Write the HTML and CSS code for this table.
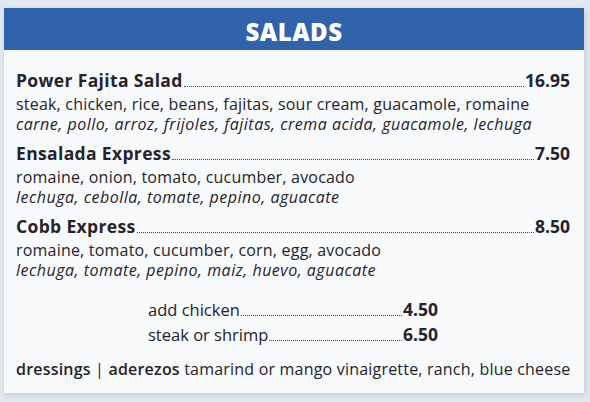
FILE: index.html
```html
<!DOCTYPE html>
<html>
<head>
<meta charset="utf-8">
<link rel="stylesheet" href="styles.css">
</head>
<body>
<div class="card">
  <div class="header">SALADS</div>
  <div class="content">
    <div class="item">
      <div class="row"><span class="name">Power Fajita Salad</span><span class="dots"></span><span class="price">16.95</span></div>
      <div class="descs">
        <div class="desc">steak, chicken, rice, beans, fajitas, sour cream, guacamole, romaine</div>
        <div class="desc es">carne, pollo, arroz, frijoles, fajitas, crema acida, guacamole, lechuga</div>
      </div>
    </div>
    <div class="item">
      <div class="row"><span class="name">Ensalada Express</span><span class="dots"></span><span class="price">7.50</span></div>
      <div class="descs">
        <div class="desc">romaine, onion, tomato, cucumber, avocado</div>
        <div class="desc es">lechuga, cebolla, tomate, pepino, aguacate</div>
      </div>
    </div>
    <div class="item">
      <div class="row"><span class="name">Cobb Express</span><span class="dots"></span><span class="price">8.50</span></div>
      <div class="descs">
        <div class="desc">romaine, tomato, cucumber, corn, egg, avocado</div>
        <div class="desc es">lechuga, tomate, pepino, maiz, huevo, aguacate</div>
      </div>
    </div>
    <div class="addons">
      <div class="row addon"><span class="aname">add chicken</span><span class="dots"></span><span class="price">4.50</span></div>
      <div class="row addon"><span class="aname">steak or shrimp</span><span class="dots"></span><span class="price">6.50</span></div>
    </div>
    <div class="dressings"><b>dressings</b> | <b>aderezos</b> tamarind or mango vinaigrette, ranch, blue cheese</div>
  </div>
</div>
</body>
</html>
```
FILE: styles.css
```css
html, body { margin: 0; padding: 0; }
body {
  background: #e2e8ef;
  font-family: "Open Sans", "Liberation Sans", sans-serif;
  color: #25232b;
  width: 590px;
  height: 402px;
  overflow: hidden;
}
.card {
  margin: 8px 0 0 4px;
  width: 580px;
  height: 385px;
  background: #f8f9fb;
  box-shadow: 1px 2px 6px rgba(60, 80, 110, 0.2);
}
.header {
  box-sizing: border-box;
  height: 42px;
  padding-top: 5px;
  background: #3063ab;
  color: #fff;
  font-weight: 800;
  font-size: 24px;
  letter-spacing: 0.5px;
  text-align: center;
  line-height: 37px;
}
.content {
  padding: 18px 14px 0 12px;
}
.item { margin-bottom: 7px; }
.row {
  display: flex;
  align-items: baseline;
}
.name, .price {
  font-weight: 700;
  font-size: 17.5px;
  line-height: 24px;
}
.name { letter-spacing: 0.35px; }
.dots {
  flex: 1;
  border-bottom: 1px dotted #4a4a55;
  margin: 0 1px;
}
.descs { margin-top: 2px; }
.desc {
  font-size: 16px;
  line-height: 20px;
  font-weight: 400;
  letter-spacing: 0.2px;
  white-space: nowrap;
}
.es { font-style: italic; letter-spacing: 0.5px; }
.addons {
  width: 290px;
  margin: 17px auto 0;
}
.aname { font-size: 16.5px; line-height: 24px; }
.dressings {
  margin-top: 12px;
  font-size: 16px;
  line-height: 20px;
  letter-spacing: 0.2px;
  white-space: nowrap;
}
.dressings b { font-weight: 600; }
```
